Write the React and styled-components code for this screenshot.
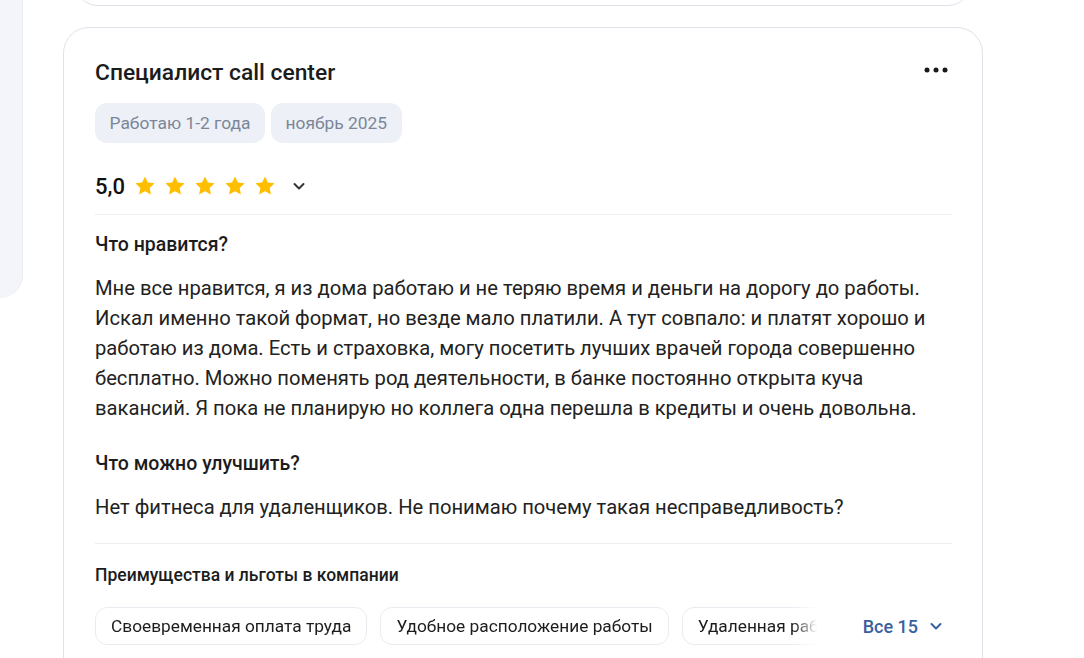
import React from "react";
import styled, { createGlobalStyle } from "styled-components";

const GlobalStyle = createGlobalStyle`
  * { box-sizing: border-box; }
  html, body {
    margin: 0;
    padding: 0;
    background: #ffffff;
    font-family: Roboto, "Noto Sans", "Liberation Sans", sans-serif;
    color: #1f1f1f;
    overflow: hidden;
  }
`;

const tags = ["Работаю 1-2 года", "ноябрь 2025"];

const perks = [
  "Своевременная оплата труда",
  "Удобное расположение работы",
  "Удаленная работа",
  "ДМС",
];

const Star = () => (
  <svg width="24" height="24" viewBox="0 0 24 24">
    <path
      d="M12 2.4l2.9 6.1 6.7.85-4.95 4.6 1.3 6.6L12 17.3l-5.95 3.25 1.3-6.6L2.4 9.35l6.7-.85z"
      fill="#ffbf00"
    />
  </svg>
);

const Chevron = ({ color = "#333", size = 16 }) => (
  <svg width={size} height={size} viewBox="0 0 16 16" fill="none">
    <path
      d="M3.5 6l4.5 4.5L12.5 6"
      stroke={color}
      strokeWidth="2"
      strokeLinecap="round"
      strokeLinejoin="round"
    />
  </svg>
);

const Dots = () => (
  <svg width="24" height="8" viewBox="0 0 24 8">
    <circle cx="3" cy="4" r="2.5" fill="#1a1a1a" />
    <circle cx="12" cy="4" r="2.5" fill="#1a1a1a" />
    <circle cx="21" cy="4" r="2.5" fill="#1a1a1a" />
  </svg>
);

const App = () => {
  return (
    <Page>
      <GlobalStyle />
      <Sidebar />
      <Column>
        <PrevCard />
        <Card>
          <Header>
            <Title>Специалист call center</Title>
            <MenuButton>
              <Dots />
            </MenuButton>
          </Header>
          <Tags>
            {tags.map((t) => (
              <Tag key={t}>{t}</Tag>
            ))}
          </Tags>
          <Rating>
            <Score>5,0</Score>
            <Stars>
              {[0, 1, 2, 3, 4].map((i) => (
                <Star key={i} />
              ))}
            </Stars>
            <Toggle>
              <Chevron />
            </Toggle>
          </Rating>
          <Divider />
          <SectionTitle>Что нравится?</SectionTitle>
          <Text>
            Мне все нравится, я из дома работаю и не теряю время и деньги на
            дорогу до работы. Искал именно такой формат, но везде мало платили.
            А тут совпало: и платят хорошо и работаю из дома. Есть и страховка,
            могу посетить лучших врачей города совершенно бесплатно. Можно
            поменять род деятельности, в банке постоянно открыта куча вакансий.
            Я пока не планирую но коллега одна перешла в кредиты и очень
            довольна.
          </Text>
          <SectionTitle $top={29}>Что можно улучшить?</SectionTitle>
          <Text>
            Нет фитнеса для удаленщиков. Не понимаю почему такая
            несправедливость?
          </Text>
          <Divider $top={21} />
          <PerksTitle>Преимущества и льготы в компании</PerksTitle>
          <PerksRow>
            <Chips>
              {perks.map((p) => (
                <Chip key={p}>{p}</Chip>
              ))}
            </Chips>
            <MoreButton>
              Все 15
              <Chevron color="#3a5f9f" />
            </MoreButton>
          </PerksRow>
        </Card>
      </Column>
    </Page>
  );
};

const Page = styled.div`
  display: flex;
  align-items: flex-start;
  height: 658px;
  overflow: hidden;
`;

const Sidebar = styled.div`
  width: 23px;
  height: 298px;
  flex-shrink: 0;
  background: #f4f5fa;
  border-right: 1px solid #e9ebf1;
  border-bottom-right-radius: 24px;
`;

const Column = styled.div`
  margin-left: 40px;
  width: 920px;
  display: flex;
  flex-direction: column;
  gap: 21px;
`;

const PrevCard = styled.div`
  margin: -40px 12px 0 12px;
  height: 46px;
  border: 1px solid #dde1e9;
  border-radius: 24px;
  background: #fff;
`;

const Card = styled.div`
  border: 1px solid #dfe3ea;
  border-radius: 26px;
  background: #fff;
  padding: 33px 30px 40px 31px;
`;

const Header = styled.div`
  display: flex;
  align-items: center;
  justify-content: space-between;
  height: 24px;
`;

const Title = styled.h2`
  margin: 0;
  font-size: 22.8px;
  line-height: 24px;
  font-weight: 500;
  color: #1c1c1c;
`;

const MenuButton = styled.div`
  display: flex;
  align-items: center;
  margin-right: 4px;
  margin-top: -6px;
`;

const Tags = styled.div`
  display: flex;
  gap: 6px;
  margin-top: 18px;
`;

const Tag = styled.span`
  height: 40px;
  padding: 0 14.5px;
  display: inline-flex;
  align-items: center;
  border-radius: 12px;
  background: #edf0f7;
  color: #7b8699;
  font-size: 17.4px;
`;

const Rating = styled.div`
  display: flex;
  align-items: center;
  height: 28px;
  margin-top: 29px;
`;

const Score = styled.span`
  font-size: 22px;
  font-weight: 500;
  color: #111;
  margin-right: 8px;
`;

const Stars = styled.div`
  display: flex;
  gap: 6px;
`;

const Toggle = styled.div`
  display: flex;
  margin-left: 14px;
`;

const Divider = styled.div`
  height: 1px;
  background: #eceef2;
  margin-top: ${(p) => p.$top ?? 14}px;
`;

const SectionTitle = styled.h3`
  margin: ${(p) => p.$top ?? 18}px 0 0;
  font-size: 19.5px;
  line-height: 24px;
  font-weight: 500;
  color: #1c1c1c;
`;

const Text = styled.p`
  margin: 16px 0 0;
  font-size: 20.2px;
  line-height: 30px;
  color: #222;
`;

const PerksTitle = styled.h4`
  margin: 19px 0 0;
  font-size: 17.5px;
  line-height: 24px;
  font-weight: 500;
  color: #1c1c1c;
`;

const PerksRow = styled.div`
  display: flex;
  align-items: center;
  margin-top: 20px;
`;

const Chips = styled.div`
  flex: 1;
  min-width: 0;
  display: flex;
  gap: 13px;
  overflow: hidden;
  -webkit-mask-image: linear-gradient(to right, #000 calc(100% - 24px), transparent);
  mask-image: linear-gradient(to right, #000 calc(100% - 24px), transparent);
`;

const Chip = styled.span`
  flex-shrink: 0;
  height: 38px;
  padding: 0 15px;
  display: inline-flex;
  align-items: center;
  border: 1px solid #e8ebf0;
  border-radius: 12px;
  font-size: 17.3px;
  color: #1c1c1c;
  white-space: nowrap;
`;

const MoreButton = styled.button`
  margin-left: 46px;
  padding: 0 8px 0 0;
  border: none;
  background: none;
  display: flex;
  align-items: center;
  gap: 10px;
  font-family: inherit;
  font-size: 18px;
  font-weight: 500;
  color: #3a5f9f;
  cursor: pointer;
`;

export default App;
